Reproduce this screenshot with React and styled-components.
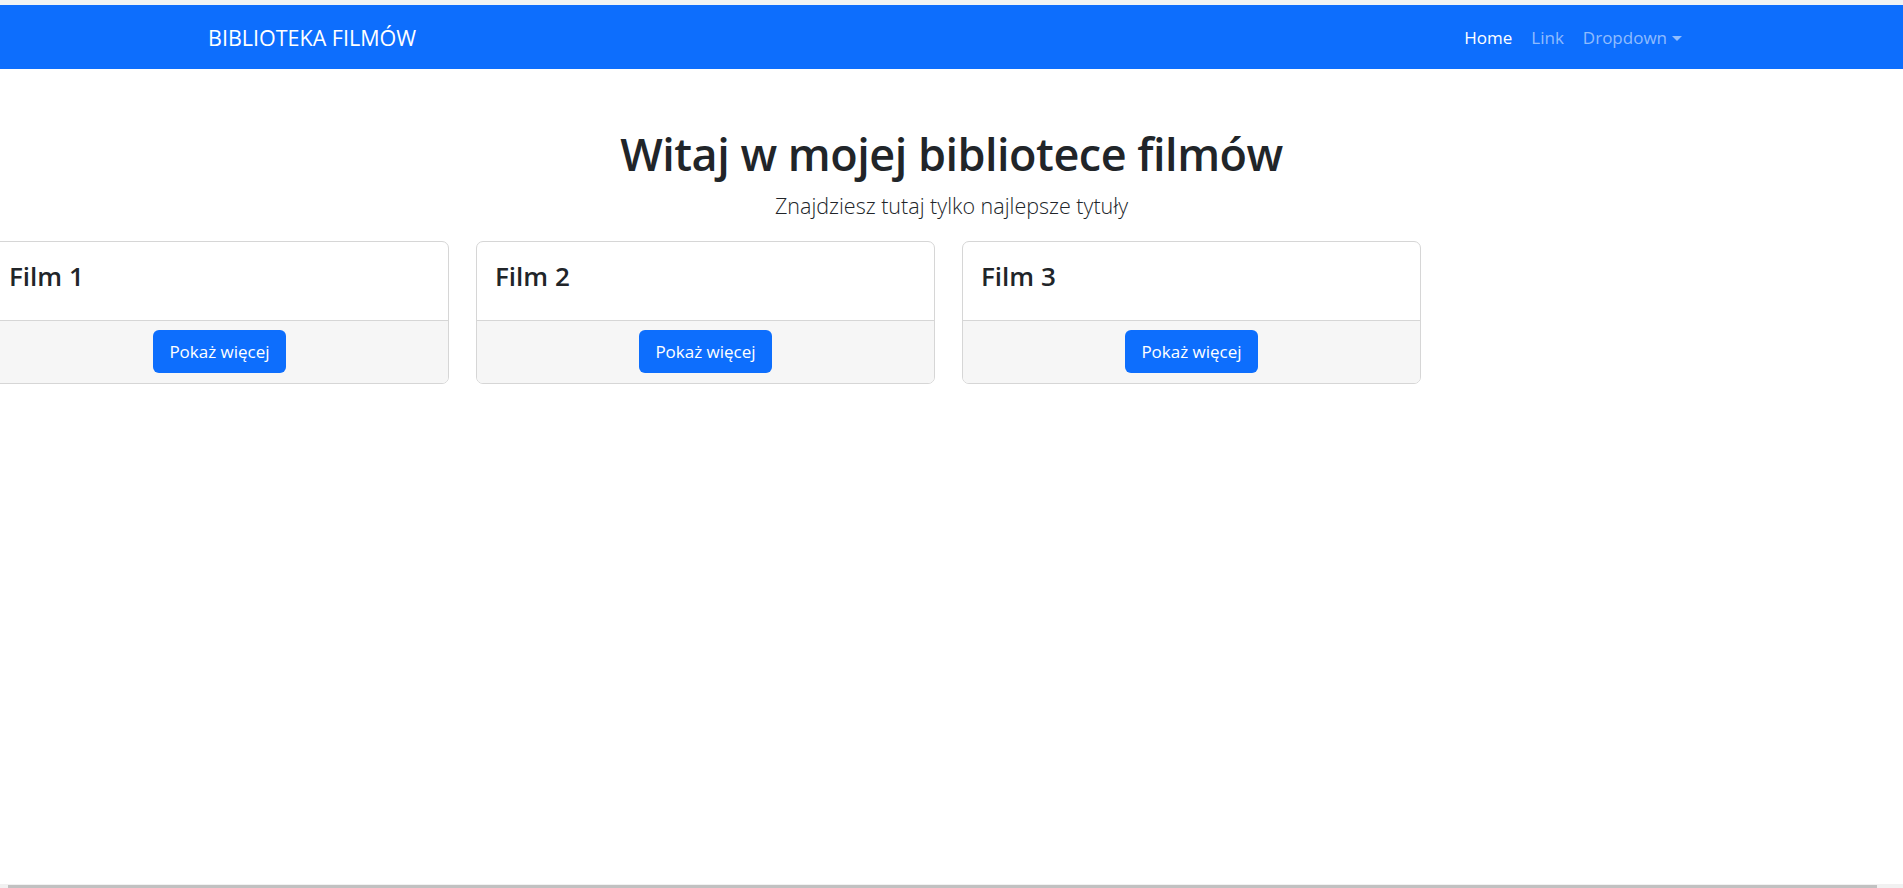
import React from "react";
import styled, { createGlobalStyle } from "styled-components";

const Global = createGlobalStyle`
  html, body { margin: 0; padding: 0; background: #ffffff; }
  body {
    font-family: "Open Sans", "Noto Sans", sans-serif;
    color: #212529;
    overflow-x: hidden;
  }
  * { box-sizing: border-box; }
`;

const Page = styled.div`
  min-height: 888px;
  border-top: 5px solid #f0f3f4;
`;

const Navbar = styled.nav`
  background: #0d6efd;
  height: 64px;
  display: flex;
  align-items: center;
  padding: 0 221px 0 208px;
`;

const Brand = styled.a`
  color: #ffffff;
  font-size: 21.5px;
  text-transform: uppercase;
  text-decoration: none;
  margin-right: auto;
`;

const NavList = styled.ul`
  display: flex;
  align-items: center;
  gap: 19px;
  list-style: none;
  margin: 0;
  padding: 0;
`;

const NavLink = styled.a`
  color: ${(p) => (p.$active ? "#ffffff" : "rgba(255,255,255,0.55)")};
  font-size: 17px;
  text-decoration: none;
  display: inline-flex;
  align-items: center;
  gap: 5px;
`;

const Caret = styled.span`
  display: inline-block;
  width: 0;
  height: 0;
  border-left: 5px solid transparent;
  border-right: 5px solid transparent;
  border-top: 5px solid currentColor;
  margin-top: 2px;
`;

const Hero = styled.header`
  text-align: center;
  padding-top: 58px;
`;

const Title = styled.h1`
  margin: 0;
  font-size: 45px;
  font-weight: 600;
  line-height: 1.2;
  letter-spacing: -0.5px;
`;

const Lead = styled.p`
  margin: 10px 0 0;
  font-size: 21.5px;
  font-weight: 300;
  line-height: 1.4;
  color: #212529;
`;

const CardRow = styled.div`
  display: grid;
  grid-template-columns: repeat(3, 459px);
  gap: 27px;
  margin: 20px 0 0 -10px;
`;

const Card = styled.div`
  border: 1px solid #d6d6d6;
  border-radius: 7px;
  overflow: hidden;
  background: #fff;
`;

const CardBody = styled.div`
  height: 78px;
  padding: 18px 18px 0;
`;

const CardTitle = styled.h3`
  margin: 0;
  font-size: 26px;
  font-weight: 600;
  line-height: 1.3;
`;

const CardFooter = styled.div`
  border-top: 1px solid #d6d6d6;
  background: #f6f6f6;
  padding: 9px 0 10px;
  display: flex;
  justify-content: center;
`;

const Button = styled.button`
  background: #0d6efd;
  color: #ffffff;
  border: none;
  border-radius: 6px;
  height: 43px;
  padding: 0 16px;
  font-family: inherit;
  font-size: 17px;
  cursor: pointer;
`;

const ScrollTrack = styled.div`
  position: fixed;
  left: 0;
  right: 0;
  bottom: 0;
  height: 4px;
  background: #f1f1f1;
  padding: 1px 26px 0 8px;
`;

const ScrollThumb = styled.div`
  height: 3px;
  background: #c1c1c1;
`;

const films = ["Film 1", "Film 2", "Film 3"];

export default function App() {
  return (
    <Page>
      <Global />
      <Navbar>
        <Brand href="#">Biblioteka filmów</Brand>
        <NavList>
          <li><NavLink $active href="#">Home</NavLink></li>
          <li><NavLink href="#">Link</NavLink></li>
          <li><NavLink href="#">Dropdown<Caret /></NavLink></li>
        </NavList>
      </Navbar>
      <Hero>
        <Title>Witaj w mojej bibliotece filmów</Title>
        <Lead>Znajdziesz tutaj tylko najlepsze tytuły</Lead>
      </Hero>
      <CardRow>
        {films.map((f) => (
          <Card key={f}>
            <CardBody>
              <CardTitle>{f}</CardTitle>
            </CardBody>
            <CardFooter>
              <Button>Pokaż więcej</Button>
            </CardFooter>
          </Card>
        ))}
      </CardRow>
      <ScrollTrack>
        <ScrollThumb />
      </ScrollTrack>
    </Page>
  );
}
